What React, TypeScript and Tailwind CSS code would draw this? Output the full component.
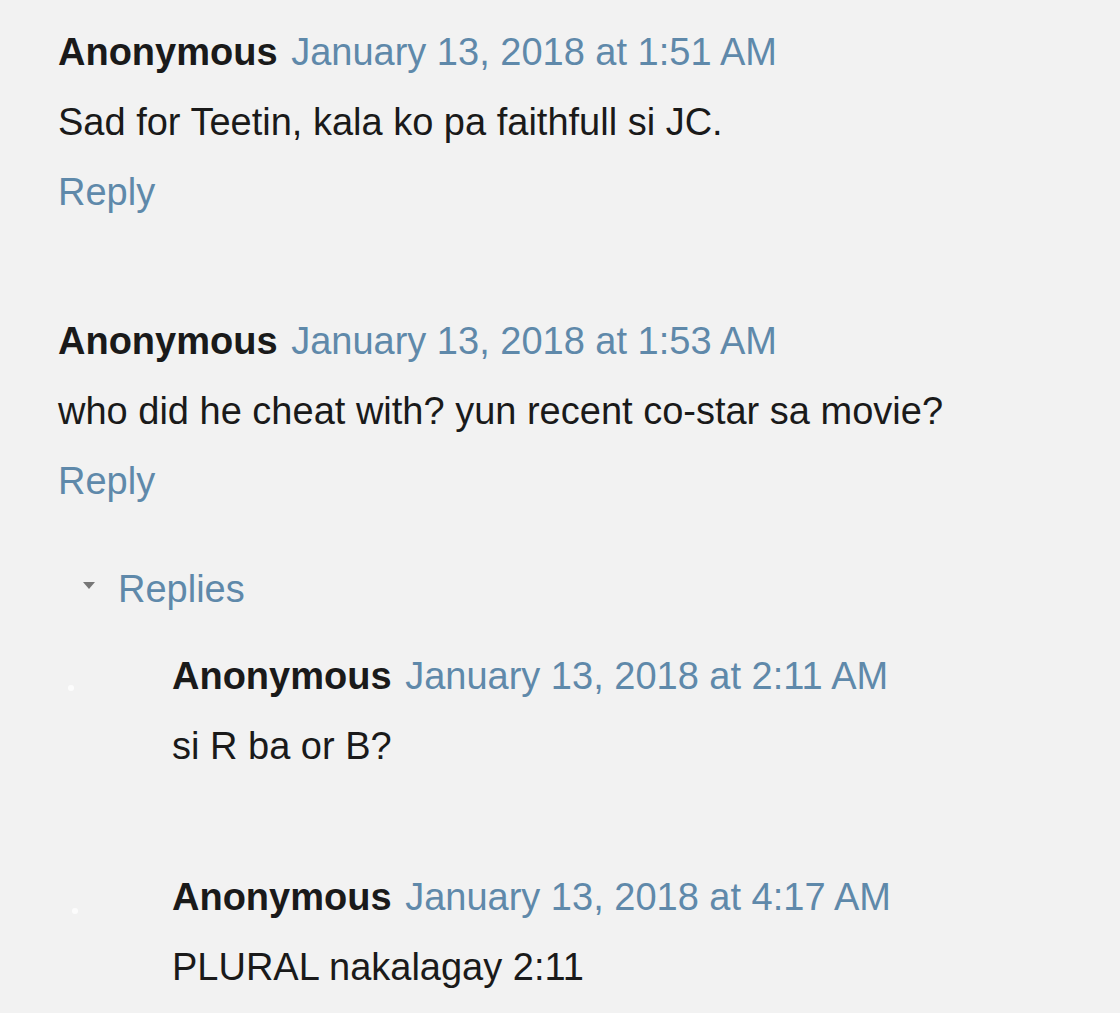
const FONT = { fontFamily: '"Liberation Sans", Arial, sans-serif' };

interface CommentProps {
  author: string;
  date: string;
  body: string;
  showReply?: boolean;
}

function Comment({ author, date, body, showReply = true }: CommentProps) {
  return (
    <div className="flex flex-col">
      <div className="h-[70px] leading-[70px] whitespace-nowrap">
        <span className="font-bold text-[#1a1a1a]">{author}</span>{' '}
        <span className="ml-[3px] text-[#5f89aa]">{date}</span>
      </div>
      <div className="h-[70px] leading-[70px] text-[#1a1a1a] whitespace-nowrap">{body}</div>
      {showReply && <div className="h-[70px] leading-[70px] text-[#5f89aa]">Reply</div>}
    </div>
  );
}

export default function App() {
  return (
    <div
      className="w-[1120px] h-[1013px] overflow-hidden bg-[#f2f2f2] text-[38px] pl-[58px] pt-[17px]"
      style={FONT}
    >
      <Comment
        author="Anonymous"
        date="January 13, 2018 at 1:51 AM"
        body="Sad for Teetin, kala ko pa faithfull si JC."
      />
      <div className="mt-[79px]">
        <Comment
          author="Anonymous"
          date="January 13, 2018 at 1:53 AM"
          body="who did he cheat with? yun recent co-star sa movie?"
        />
      </div>

      {/* Replies thread */}
      <div className="mt-[38px] flex items-center h-[70px] pl-[25px]">
        <svg width="12" height="8" viewBox="0 0 12 8" className="mr-[23px] -mt-[6px]">
          <path d="M0 0 L12 0 L6 7 Z" fill="#777" />
        </svg>
        <span className="text-[#5f89aa]">Replies</span>
      </div>

      <div className="mt-[17px] pl-[114px] flex flex-col relative">
        <span className="absolute left-[10px] top-[44px] w-[6px] h-[6px] rounded-full bg-white/80" />
        <Comment
          author="Anonymous"
          date="January 13, 2018 at 2:11 AM"
          body="si R ba or B?"
          showReply={false}
        />
        <div className="mt-[81px] relative">
          <span className="absolute -left-[100px] top-[46px] w-[6px] h-[6px] rounded-full bg-white/80" />
          <Comment
            author="Anonymous"
            date="January 13, 2018 at 4:17 AM"
            body="PLURAL nakalagay 2:11"
            showReply={false}
          />
        </div>
      </div>
    </div>
  );
}
